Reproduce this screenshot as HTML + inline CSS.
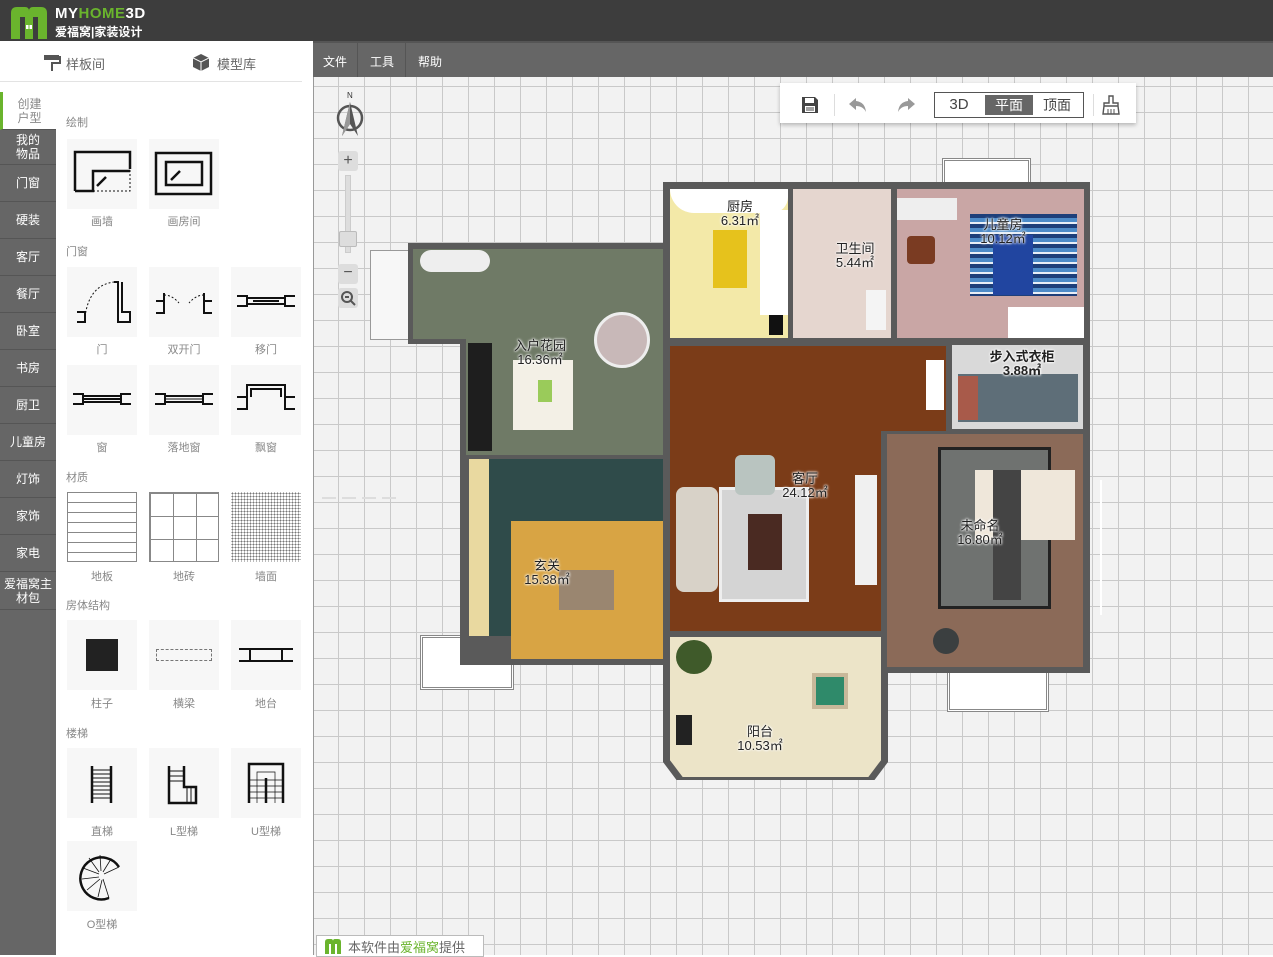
<!DOCTYPE html>
<html><head><meta charset="utf-8"><style>
*{margin:0;padding:0;box-sizing:border-box}
body{width:1273px;height:955px;overflow:hidden;position:relative;font-family:"Liberation Sans","Noto Sans CJK SC",sans-serif;background:#fff}
.a{position:absolute}
#hdr{left:0;top:0;width:1273px;height:41px;background:#3d3d3d}
#menu{left:313px;top:41px;width:960px;height:36px;background:#666;border-top:2px solid #555}
#menu span{position:absolute;top:10px;color:#fff;font-size:12px}
#canvas{left:313px;top:77px;width:960px;height:878px;background-color:#f2f2f2;
background-image:linear-gradient(90deg,#c9c9c9 1px,transparent 1px),linear-gradient(#c9c9c9 1px,transparent 1px);
background-size:26px 26px;background-position:24px 9px;border-left:1px solid #999}
#tabs{left:0;top:92px;width:56px;height:863px;background:#666}
.tab{position:absolute;left:0;width:56px;color:#fff;font-size:12px;text-align:center;border-bottom:1px solid #555;display:flex;align-items:center;justify-content:center;line-height:14px}
.sec{position:absolute;left:66px;font-size:11px;color:#888}
.tile{position:absolute;width:70px;height:70px;background:#f7f7f7}
.cap{position:absolute;width:70px;text-align:center;font-size:11px;color:#888}
.w{position:absolute;background:#5a5a5a}
.r{position:absolute}
.lbl{position:absolute;font-size:13px;color:#222;text-shadow:0 0 2px #fff,0 0 2px #fff,0 0 3px #fff;text-align:center;line-height:14px;white-space:nowrap;transform:translateX(-50%)}
.bal{position:absolute;background:#fff;border:3px double #888}
</style></head><body>
<div id="hdr" class="a">
 <svg class="a" style="left:9px;top:5px" width="40" height="34" viewBox="0 0 40 34"><path d="M2 34V8Q2 2 8 2h8q4 0 4 4 0-4 4-4h8q6 0 6 6v26h-9V12h-5v22h-8V12h-5v22z" fill="#6ab42d"/><rect x="17" y="20" width="2.5" height="4" fill="#fff"/><rect x="20.5" y="20" width="2.5" height="4" fill="#fff"/></svg>
 <div class="a" style="left:55px;top:5px;font-size:15px;font-weight:bold;color:#fff;letter-spacing:0.5px">MY<span style="color:#6ab42d">HOME</span>3D</div>
 <div class="a" style="left:55px;top:23px;font-size:12px;font-weight:bold;color:#fff">爱福窝|家装设计</div>
</div>
<div id="menu" class="a"><span style="left:10px">文件</span><span style="left:57px">工具</span><span style="left:105px">帮助</span>
<div class="a" style="left:44px;top:0;width:1px;height:34px;background:#555"></div><div class="a" style="left:92px;top:0;width:1px;height:34px;background:#555"></div></div>

<!-- left panel -->
<div class="a" style="left:0;top:41px;width:313px;height:914px;background:#fff"></div>
<svg class="a" style="left:43px;top:54px" width="18" height="18" viewBox="0 0 18 18"><rect x="1" y="1" width="15" height="5" fill="#555"/><path d="M16 3h1v6H9v8" stroke="#555" stroke-width="2" fill="none"/></svg>
<div class="a" style="left:66px;top:54px;font-size:13px;color:#666">样板间</div>
<svg class="a" style="left:193px;top:54px" width="16" height="17" viewBox="0 0 16 17"><path d="M8 0l8 4v9l-8 4-8-4V4z" fill="#555"/><path d="M0 4l8 4 8-4M8 8v9" stroke="#fff" stroke-width="1" fill="none"/></svg>
<div class="a" style="left:217px;top:54px;font-size:13px;color:#666">模型库</div>
<div class="a" style="left:0;top:81px;width:302px;height:1px;background:#e3e3e3"></div>
<div id="tabs" class="a"></div>
<div class="tab" style="top:92px;height:38px;background:#fff;color:#888;border-left:3px solid #6ab42d">创建<br>户型</div>
<div class="tab" style="top:130px;height:35px">我的<br>物品</div>
<div class="tab" style="top:165px;height:37px">门窗</div>
<div class="tab" style="top:202px;height:37px">硬装</div>
<div class="tab" style="top:239px;height:37px">客厅</div>
<div class="tab" style="top:276px;height:37px">餐厅</div>
<div class="tab" style="top:313px;height:37px">卧室</div>
<div class="tab" style="top:350px;height:37px">书房</div>
<div class="tab" style="top:387px;height:37px">厨卫</div>
<div class="tab" style="top:424px;height:37px">儿童房</div>
<div class="tab" style="top:461px;height:37px">灯饰</div>
<div class="tab" style="top:498px;height:37px">家饰</div>
<div class="tab" style="top:535px;height:37px">家电</div>
<div class="tab" style="top:572px;height:38px">爱福窝主<br>材包</div>

<div class="sec" style="top:114px">绘制</div>
<div class="tile" style="left:67px;top:139px"><svg width="70" height="70" viewBox="0 0 70 70"><path d="M8 52V13h55v17M8 52h18V32h37" stroke="#111" stroke-width="2.5" fill="none"/><path d="M26 52h37V30" stroke="#111" stroke-dasharray="2 2" fill="none"/><path d="M30 47l9-9" stroke="#111" stroke-width="2.5"/></svg></div>
<div class="tile" style="left:149px;top:139px"><svg width="70" height="70" viewBox="0 0 70 70"><rect x="7" y="14" width="55" height="41" stroke="#111" stroke-width="2.5" fill="none"/><rect x="17" y="23" width="36" height="23" stroke="#111" stroke-width="2.5" fill="none"/><path d="M22 41l9-9" stroke="#111" stroke-width="2.5"/></svg></div>
<div class="cap" style="left:67px;top:213px">画墙</div><div class="cap" style="left:149px;top:213px">画房间</div>

<div class="sec" style="top:243px">门窗</div>
<div class="tile" style="left:67px;top:267px"><svg width="70" height="70" viewBox="0 0 70 70"><path d="M10 45h8v10h-8M47 15h4v40h12v-10h-8V15" stroke="#111" stroke-width="2" fill="none"/><path d="M18 50Q22 18 47 15" stroke="#111" stroke-dasharray="2 2" fill="none"/></svg></div>
<div class="tile" style="left:149px;top:267px"><svg width="70" height="70" viewBox="0 0 70 70"><path d="M7 34h8v12H7M63 34h-8v12h8M15 34v-8M55 34v-8" stroke="#111" stroke-width="2" fill="none"/><path d="M15 28q8 0 15 8M55 28q-8 0-15 8" stroke="#111" stroke-dasharray="2 2" fill="none"/></svg></div>
<div class="tile" style="left:231px;top:267px"><svg width="70" height="70" viewBox="0 0 70 70"><path d="M6 29h10v10H6M64 29H54v10h10M16 31h38M16 37h38M22 34h26" stroke="#111" stroke-width="2" fill="none"/></svg></div>
<div class="cap" style="left:67px;top:341px">门</div><div class="cap" style="left:149px;top:341px">双开门</div><div class="cap" style="left:231px;top:341px">移门</div>
<div class="tile" style="left:67px;top:365px"><svg width="70" height="70" viewBox="0 0 70 70"><path d="M6 29h10v10H6M64 29H54v10h10M16 31h38M16 37h38M16 34h38" stroke="#111" stroke-width="2" fill="none"/></svg></div>
<div class="tile" style="left:149px;top:365px"><svg width="70" height="70" viewBox="0 0 70 70"><path d="M6 29h10v10H6M64 29H54v10h10M16 31h38M16 37h38" stroke="#111" stroke-width="2" fill="none"/><path d="M16 34h38" stroke="#111"/></svg></div>
<div class="tile" style="left:231px;top:365px"><svg width="70" height="70" viewBox="0 0 70 70"><path d="M6 32h10v12H6M64 32H54v12h10M16 32V20h38v12M20 32V24h30v8" stroke="#111" stroke-width="2" fill="none"/></svg></div>
<div class="cap" style="left:67px;top:439px">窗</div><div class="cap" style="left:149px;top:439px">落地窗</div><div class="cap" style="left:231px;top:439px">飘窗</div>

<div class="sec" style="top:469px">材质</div>
<div class="tile" style="left:67px;top:492px;background:repeating-linear-gradient(#fff 0 9px,#888 9px 10px);border:1px solid #888"></div>
<div class="tile" style="left:149px;top:492px;background:#fff;border:1px solid #888;background-image:linear-gradient(90deg,#888 1px,transparent 1px),linear-gradient(#888 1px,transparent 1px);background-size:23px 23px"></div>
<div class="tile" style="left:231px;top:492px;background-image:radial-gradient(#777 0.8px,#fff 1px);background-size:3px 3px"></div>
<div class="cap" style="left:67px;top:568px">地板</div><div class="cap" style="left:149px;top:568px">地砖</div><div class="cap" style="left:231px;top:568px">墙面</div>

<div class="sec" style="top:597px">房体结构</div>
<div class="tile" style="left:67px;top:620px"><div class="a" style="left:19px;top:19px;width:32px;height:32px;background:#222"></div></div>
<div class="tile" style="left:149px;top:620px"><div class="a" style="left:7px;top:29px;width:56px;height:12px;border:1px dashed #777"></div></div>
<div class="tile" style="left:231px;top:620px"><svg width="70" height="70" viewBox="0 0 70 70"><path d="M8 29h11v12H8M62 29H51v12h11M19 29h32M19 41h32" stroke="#111" stroke-width="2" fill="none"/></svg></div>
<div class="cap" style="left:67px;top:695px">柱子</div><div class="cap" style="left:149px;top:695px">横梁</div><div class="cap" style="left:231px;top:695px">地台</div>

<div class="sec" style="top:725px">楼梯</div>
<div class="tile" style="left:67px;top:748px"><svg width="70" height="70" viewBox="0 0 70 70"><path d="M25 18v37M44 18v37" stroke="#111" stroke-width="2.5"/><path d="M25 22h19M25 26h19M25 30h19M25 34h19M25 38h19M25 42h19M25 46h19M25 50h19" stroke="#111"/></svg></div>
<div class="tile" style="left:149px;top:748px"><svg width="70" height="70" viewBox="0 0 70 70"><path d="M20 18v37h27V39H35V18" stroke="#111" stroke-width="2.5" fill="none"/><path d="M20 23h15M20 28h15M20 33h15M38 39v16M42 39v16" stroke="#111"/></svg></div>
<div class="tile" style="left:231px;top:748px"><svg width="70" height="70" viewBox="0 0 70 70"><path d="M18 55V16h34v39M35 55V30" stroke="#111" stroke-width="2.5" fill="none"/><path d="M26 55V24h18v31M18 32h34M18 38h34M18 44h34M18 50h34" stroke="#111" stroke-width="0.7" fill="none"/></svg></div>
<div class="cap" style="left:67px;top:823px">直梯</div><div class="cap" style="left:149px;top:823px">L型梯</div><div class="cap" style="left:231px;top:823px">U型梯</div>
<div class="tile" style="left:67px;top:841px"><svg width="70" height="70" viewBox="0 0 70 70"><path d="M52 26A21 21 0 1 0 42 57" stroke="#111" stroke-width="2.5" fill="none"/><path d="M52 26L37 33M44 18L36 31M33 14L34 30M22 17L32 31M16 27L32 33M15 38L32 36M20 49L33 38M31 56L35 39M42 57L36 38" stroke="#111" stroke-width="0.8"/></svg></div>
<div class="cap" style="left:67px;top:916px">O型梯</div>

<!-- canvas -->
<div id="canvas" class="a"></div>
<div class="a" style="left:322px;top:497px;width:75px;height:2px;background:repeating-linear-gradient(90deg,#ddd 0 14px,transparent 14px 20px)"></div>
<div class="a" style="left:1100px;top:480px;width:2px;height:135px;background:#fff"></div>
<!-- compass -->
<svg class="a" style="left:333px;top:90px" width="36" height="50" viewBox="0 0 36 50"><text x="14" y="8" font-size="8" fill="#333" font-family="Liberation Sans">N</text><circle cx="17" cy="28" r="12" stroke="#555" stroke-width="2.5" fill="none"/><path d="M17 12L9 46L17 34L25 46z" fill="#555"/><path d="M17 12L17 34L9 46z" fill="#999"/></svg>
<!-- zoom -->
<div class="a" style="left:338px;top:151px;width:20px;height:20px;background:#ddd;border-radius:3px;color:#555;font-size:16px;text-align:center;line-height:19px">+</div>
<div class="a" style="left:345px;top:175px;width:6px;height:78px;background:#ddd;border:1px solid #ccc"></div>
<div class="a" style="left:339px;top:231px;width:18px;height:16px;background:#ddd;border:1px solid #bbb;border-radius:2px"></div>
<div class="a" style="left:338px;top:264px;width:20px;height:20px;background:#ddd;border-radius:3px;color:#555;font-size:16px;text-align:center;line-height:18px">−</div>
<div class="a" style="left:338px;top:288px;width:20px;height:20px;background:#ddd;border-radius:3px"><svg width="20" height="20"><circle cx="9" cy="9" r="5" stroke="#555" stroke-width="2" fill="none"/><path d="M13 13l4 4M7 9h4" stroke="#555" stroke-width="2"/></svg></div>

<!-- toolbar -->
<div class="a" style="left:780px;top:83px;width:356px;height:40px;background:#fff;box-shadow:0 2px 4px rgba(0,0,0,.25)"></div>
<svg class="a" style="left:801px;top:96px" width="18" height="18" viewBox="0 0 18 18"><path d="M1 1h13l3 3v13H1z" fill="#444"/><rect x="4" y="2" width="9" height="5" fill="#fff"/><rect x="4" y="10" width="10" height="6" fill="#fff"/><path d="M5 12h8M5 14h8" stroke="#444"/></svg>
<div class="a" style="left:834px;top:94px;width:1px;height:22px;background:#ddd"></div>
<svg class="a" style="left:848px;top:96px" width="20" height="18" viewBox="0 0 20 18"><path d="M8 2L1 8l7 6v-4q7 0 10 6Q17 6 8 5z" fill="#999"/></svg>
<svg class="a" style="left:896px;top:96px" width="20" height="18" viewBox="0 0 20 18"><path d="M12 2l7 6-7 6v-4q-7 0-10 6Q3 6 12 5z" fill="#999"/></svg>
<div class="a" style="left:934px;top:92px;width:150px;height:26px;border:1px solid #555"></div>
<div class="a" style="left:935px;top:93px;width:48px;height:24px;font-size:15px;color:#444;text-align:center;line-height:24px">3D</div>
<div class="a" style="left:985px;top:95px;width:48px;height:20px;background:#666;color:#fff;font-size:14px;text-align:center;line-height:20px">平面</div>
<div class="a" style="left:1033px;top:93px;width:48px;height:24px;font-size:14px;color:#444;text-align:center;line-height:24px">顶面</div>
<div class="a" style="left:1093px;top:94px;width:1px;height:22px;background:#ddd"></div>
<svg class="a" style="left:1102px;top:95px" width="18" height="20" viewBox="0 0 18 20"><path d="M7 1h4v7h5v3H2V8h5z M2 11l-1 8h16l-1-8" stroke="#555" stroke-width="1.4" fill="none"/><path d="M6 14v5M9 14v5M12 14v5" stroke="#555"/></svg>

<!-- floor plan: balconies -->
<div class="bal" style="left:942px;top:158px;width:89px;height:33px"></div>
<div class="bal" style="left:947px;top:666px;width:102px;height:46px"></div>
<div class="bal" style="left:420px;top:635px;width:94px;height:55px"></div>
<div class="a" style="left:370px;top:250px;width:40px;height:90px;border:1px solid #999;border-right:none;background:#f7f7f7"></div>
<!-- walls -->
<div class="w" style="left:408px;top:243px;width:262px;height:101px"></div>
<div class="w" style="left:460px;top:340px;width:210px;height:325px"></div>
<div class="w" style="left:663px;top:182px;width:427px;height:164px"></div>
<div class="w" style="left:663px;top:340px;width:290px;height:300px"></div>
<div class="w" style="left:945px;top:340px;width:145px;height:95px"></div>
<div class="w" style="left:878px;top:428px;width:212px;height:245px"></div>
<div class="w" style="left:663px;top:630px;width:225px;height:150px;clip-path:polygon(0 0,100% 0,100% 88%,94% 100%,6% 100%,0 88%)"></div>
<!-- rooms -->
<div class="r" style="left:413px;top:249px;width:250px;height:90px;background:#6f7a66"></div>
<div class="r" style="left:466px;top:336px;width:197px;height:119px;background:#6f7a66"></div>
<div class="r" style="left:420px;top:250px;width:70px;height:22px;background:#eee;border-radius:12px"></div>
<div class="r" style="left:468px;top:343px;width:24px;height:108px;background:#1e1e1e"></div>
<div class="r" style="left:513px;top:360px;width:60px;height:70px;background:#f3f0e6"></div>
<div class="r" style="left:538px;top:380px;width:14px;height:22px;background:#9acb5a"></div>
<div class="r" style="left:594px;top:312px;width:56px;height:56px;border-radius:50%;background:#c8b8b8;border:3px solid #eee"></div>
<div class="r" style="left:670px;top:189px;width:118px;height:149px;background:#f3e9a8"></div>
<div class="r" style="left:670px;top:189px;width:118px;height:24px;background:#fff;border-radius:0 0 20px 30px"></div>
<div class="r" style="left:760px;top:210px;width:28px;height:105px;background:#fff"></div>
<div class="r" style="left:769px;top:315px;width:14px;height:20px;background:#111"></div>
<div class="r" style="left:713px;top:230px;width:34px;height:58px;background:#e6c21c"></div>
<div class="r" style="left:793px;top:189px;width:98px;height:149px;background:#e5d6cf"></div>
<div class="r" style="left:866px;top:290px;width:20px;height:40px;background:#f4f4f4"></div>
<div class="r" style="left:897px;top:189px;width:187px;height:149px;background:#c9a6a5"></div>
<div class="r" style="left:897px;top:198px;width:60px;height:22px;background:#eee"></div>
<div class="r" style="left:1008px;top:307px;width:76px;height:31px;background:#fff"></div>
<div class="r" style="left:970px;top:214px;width:107px;height:82px;background:repeating-linear-gradient(#1e3f7a 0 4px,#4d8bc8 4px 8px,#e8eef7 8px 10px)"></div>
<div class="r" style="left:993px;top:235px;width:40px;height:60px;background:#2145a0"></div>
<div class="r" style="left:907px;top:236px;width:28px;height:28px;background:#7a3b22;border-radius:4px"></div>
<div class="r" style="left:670px;top:346px;width:276px;height:85px;background:#7b3c18"></div>
<div class="r" style="left:670px;top:430px;width:211px;height:201px;background:#7b3c18"></div>
<div class="r" style="left:926px;top:360px;width:18px;height:50px;background:#fff"></div>
<div class="r" style="left:676px;top:487px;width:42px;height:105px;background:#d8d2c8;border-radius:8px"></div>
<div class="r" style="left:719px;top:487px;width:90px;height:115px;background:#d4d4d4;border:3px solid #eee"></div>
<div class="r" style="left:748px;top:514px;width:34px;height:56px;background:#4a2a22"></div>
<div class="r" style="left:735px;top:455px;width:40px;height:40px;background:#b9c4c0;border-radius:6px"></div>
<div class="r" style="left:855px;top:475px;width:22px;height:110px;background:#f0f0f0"></div>
<div class="r" style="left:952px;top:345px;width:131px;height:84px;background:#d9d9d9"></div>
<div class="r" style="left:958px;top:374px;width:120px;height:48px;background:#5e6e78"></div>
<div class="r" style="left:958px;top:376px;width:20px;height:44px;background:#a85a4a"></div>
<div class="r" style="left:887px;top:434px;width:196px;height:233px;background:#8b6a58"></div>
<div class="r" style="left:938px;top:447px;width:113px;height:162px;background:#6f7270;border:3px solid #222"></div>
<div class="r" style="left:975px;top:470px;width:100px;height:70px;background:#efe7da"></div>
<div class="r" style="left:993px;top:470px;width:28px;height:130px;background:#444"></div>
<div class="r" style="left:933px;top:628px;width:26px;height:26px;border-radius:50%;background:#3b3f40"></div>
<div class="r" style="left:469px;top:459px;width:194px;height:177px;background:#2f4b4a"></div>
<div class="r" style="left:469px;top:459px;width:20px;height:177px;background:#e9d9a0"></div>
<div class="r" style="left:511px;top:521px;width:152px;height:138px;background:#d8a444"></div>
<div class="r" style="left:559px;top:570px;width:55px;height:40px;background:#9a8670"></div>
<div class="r" style="left:670px;top:637px;width:211px;height:140px;background:#ece4c8;clip-path:polygon(0 0,100% 0,100% 88%,94% 100%,6% 100%,0 88%)"></div>
<div class="r" style="left:676px;top:640px;width:36px;height:34px;border-radius:50%;background:#3f5a2a"></div>
<div class="r" style="left:812px;top:673px;width:36px;height:36px;background:#2f8a6a;border:4px solid #c8b89a"></div>
<div class="r" style="left:676px;top:715px;width:16px;height:30px;background:#222"></div>

<div class="lbl" style="left:540px;top:339px">入户花园<br>16.36㎡</div>
<div class="lbl" style="left:740px;top:200px">厨房<br>6.31㎡</div>
<div class="lbl" style="left:855px;top:242px">卫生间<br>5.44㎡</div>
<div class="lbl" style="left:1003px;top:218px">儿童房<br>10.12㎡</div>
<div class="lbl" style="left:1022px;top:350px;font-weight:bold">步入式衣柜<br>3.88㎡</div>
<div class="lbl" style="left:805px;top:472px">客厅<br>24.12㎡</div>
<div class="lbl" style="left:980px;top:519px">未命名<br>16.80㎡</div>
<div class="lbl" style="left:547px;top:559px">玄关<br>15.38㎡</div>
<div class="lbl" style="left:760px;top:725px">阳台<br>10.53㎡</div>

<!-- bottom badge -->
<div class="a" style="left:316px;top:935px;width:168px;height:22px;background:#fff;border:1px solid #bbb"></div>
<svg class="a" style="left:324px;top:938px" width="18" height="16" viewBox="0 0 18 16"><path d="M1 16V4Q1 1 4 1h3q2 0 2 2 0-2 2-2h3q3 0 3 3v12h-4V6H11v10H7V6H5v10z" fill="#6ab42d"/></svg>
<div class="a" style="left:348px;top:937px;font-size:13px;color:#666">本软件由<span style="color:#6ab42d">爱福窝</span>提供</div>
</body></html>
